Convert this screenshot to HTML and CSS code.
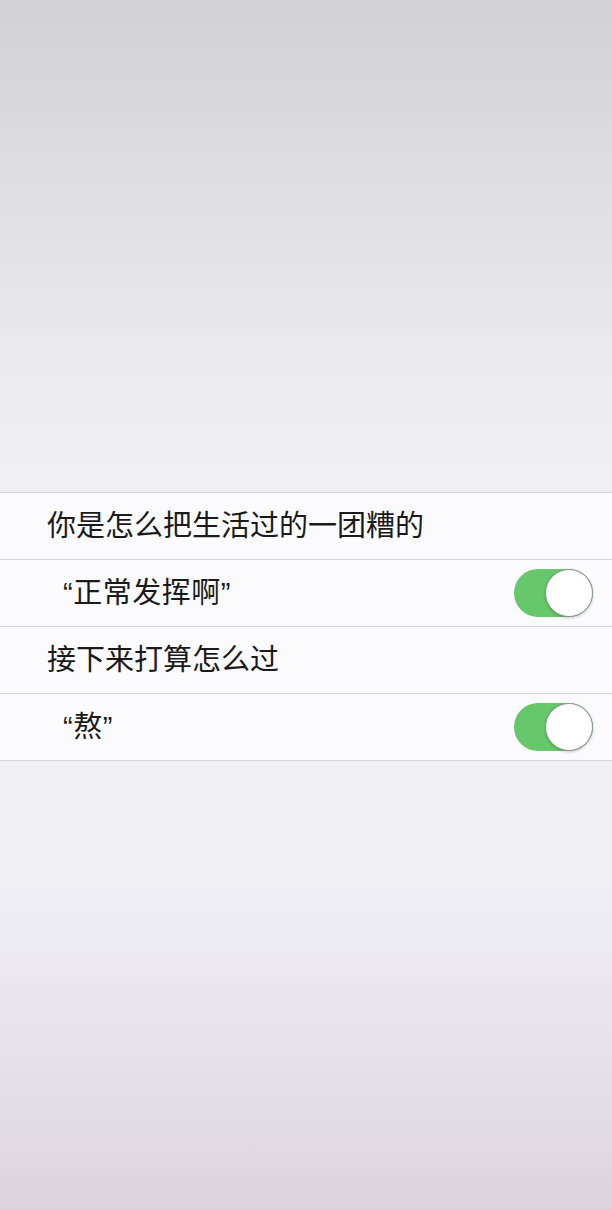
FILE: index.html
```html
<!DOCTYPE html>
<html lang="zh-CN">
<head>
    <meta charset="UTF-8">
    <meta name="viewport" content="width=device-width, initial-scale=1.0">
    <title>设置</title>
    <link rel="stylesheet" href="styles.css">
</head>
<body>
    <div class="screen">
        <ul class="settings">
            <li class="row">
                <span class="label">你是怎么把生活过的一团糟的</span>
            </li>
            <li class="row">
                <span class="label quoted">“正常发挥啊”</span>
                <span class="toggle on"><span class="knob"></span></span>
            </li>
            <li class="row">
                <span class="label">接下来打算怎么过</span>
            </li>
            <li class="row">
                <span class="label quoted">“熬”</span>
                <span class="toggle on"><span class="knob"></span></span>
            </li>
        </ul>
    </div>
</body>
</html>
```

FILE: styles.css
```css
html, body {
    margin: 0;
    padding: 0;
}
body {
    font-family: "Liberation Sans", "Noto Sans CJK SC", sans-serif;
    background: #efeff4;
}
.screen {
    height: 1209px;
    box-sizing: border-box;
    padding-top: 492px;
    background: linear-gradient(to bottom,
        #d2d1d5 0px,
        #dcdbdf 150px,
        #e9e9ed 330px,
        #efeff4 470px,
        #efeff4 880px,
        #e6e3ea 1050px,
        #dfd8e0 1160px,
        #dcd4dc 1209px);
}
.settings {
    list-style: none;
    margin: 0;
    padding: 0;
    border-top: 1px solid #d6d6da;
}
.row {
    display: flex;
    align-items: center;
    justify-content: space-between;
    height: 66px;
    padding: 0 19px 0 47px;
    background: #fbfbfd;
    border-bottom: 1px solid #d6d6da;
}
.label {
    font-size: 29px;
    color: #1a1a1a;
    line-height: 1;
    white-space: nowrap;
}
.quoted {
    padding-left: 16px;
    letter-spacing: 0.5px;
}
.toggle {
    width: 79px;
    height: 48px;
    border-radius: 24px;
    background: #e5e5ea;
    position: relative;
    flex-shrink: 0;
}
.toggle.on {
    background: #66c86b;
}
.knob {
    position: absolute;
    top: 0;
    right: 0;
    width: 46px;
    height: 46px;
    border-radius: 50%;
    background: #ffffff;
    border: 1px solid #8f9490;
    box-shadow: 0 1px 3px rgba(0, 0, 0, 0.2);
}
```
